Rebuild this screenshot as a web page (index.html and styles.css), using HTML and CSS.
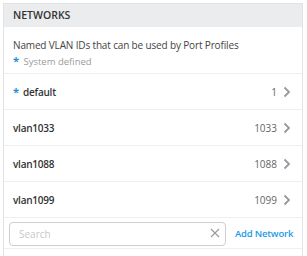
FILE: index.html
```html
<!DOCTYPE html>
<html lang="en">

<head>
    <meta charset="UTF-8">
    <title>Networks</title>
    <link rel="stylesheet" href="styles.css">
</head>

<body>
    <div class="panel">
        <div class="panel-header">NETWORKS</div>
        <div class="panel-intro">
            <p class="intro-text">Named VLAN IDs that can be used by Port Profiles</p>
            <p class="intro-note"><span class="star">*</span> System defined</p>
        </div>
        <ul class="net-list">
            <li class="net-row">
                <span class="net-name"><span class="star">*</span> default</span>
                <span class="net-id">1</span>
                <svg class="chevron" width="8" height="12" viewBox="0 0 8 12"><path d="M1.5 1.5 L6 6 L1.5 10.5" fill="none" stroke="#9a9a9a" stroke-width="1.8"/></svg>
            </li>
            <li class="net-row">
                <span class="net-name">vlan1033</span>
                <span class="net-id">1033</span>
                <svg class="chevron" width="8" height="12" viewBox="0 0 8 12"><path d="M1.5 1.5 L6 6 L1.5 10.5" fill="none" stroke="#9a9a9a" stroke-width="1.8"/></svg>
            </li>
            <li class="net-row">
                <span class="net-name">vlan1088</span>
                <span class="net-id">1088</span>
                <svg class="chevron" width="8" height="12" viewBox="0 0 8 12"><path d="M1.5 1.5 L6 6 L1.5 10.5" fill="none" stroke="#9a9a9a" stroke-width="1.8"/></svg>
            </li>
            <li class="net-row">
                <span class="net-name">vlan1099</span>
                <span class="net-id">1099</span>
                <svg class="chevron" width="8" height="12" viewBox="0 0 8 12"><path d="M1.5 1.5 L6 6 L1.5 10.5" fill="none" stroke="#9a9a9a" stroke-width="1.8"/></svg>
            </li>
        </ul>
        <div class="search-row">
            <div class="search-box">
                <input type="text" placeholder="Search">
                <svg class="clear" width="10" height="10" viewBox="0 0 10 10"><path d="M1 1 L9 9 M9 1 L1 9" stroke="#999" stroke-width="1.1"/></svg>
            </div>
            <a class="add-link" href="#">Add Network</a>
        </div>
    </div>
</body>

</html>
```

FILE: styles.css
```css
body {
    margin: 0;
    padding: 3px 4px 0 3px;
    background-color: #fff;
    font-family: 'Open Sans', sans-serif;
    color: #333;
}

.panel {
    border: 1px solid #e2e3e4;
    border-bottom: none;
    background-color: #fff;
    height: 260px;
}

.panel-header {
    background-color: #ebeced;
    height: 23px;
    line-height: 23px;
    padding-left: 9px;
    font-size: 10.5px;
    font-weight: 600;
    color: #333;
}

.panel-intro {
    padding: 10px 9px 0;
    height: 36px;
}

.intro-text {
    margin: 0;
    font-size: 10px;
    letter-spacing: -0.15px;
    line-height: 16px;
    color: #444;
}

.intro-note {
    margin: 0;
    font-size: 9.5px;
    line-height: 16px;
    color: #9b9b9b;
}

.star {
    color: #1e8fd6;
    font-weight: 700;
    font-size: 11px;
    margin-right: 2px;
}

.net-list {
    list-style: none;
    margin: 0;
    padding: 0;
}

.net-row {
    display: flex;
    align-items: center;
    height: 35px;
    padding: 0 11px 0 9px;
    border-top: 1px solid #efefef;
}

.net-name {
    flex: 1;
    font-size: 10px;
    font-weight: 600;
    letter-spacing: -0.25px;
    color: #333;
}

.net-id {
    font-size: 10px;
    color: #666;
    margin-right: 6px;
}

.search-row {
    display: flex;
    align-items: center;
    gap: 9px;
    padding: 3px 8px 3px 5px;
    border-top: 1px solid #efefef;
    border-bottom: 1px solid #efefef;
}

.search-box {
    position: relative;
    flex-shrink: 0;
    width: 217px;
    height: 24px;
}

.search-box input {
    box-sizing: border-box;
    width: 100%;
    height: 100%;
    border: 1px solid #cfcfcf;
    border-radius: 4px;
    padding: 0 22px 0 9px;
    font-family: 'Open Sans', sans-serif;
    font-size: 10px;
}

.search-box input::placeholder {
    color: #c8c8c8;
}

.clear {
    position: absolute;
    right: 6px;
    top: 7px;
}

.add-link {
    white-space: nowrap;
    font-size: 9.5px;
    font-weight: 600;
    letter-spacing: -0.2px;
    color: #1a9be4;
    text-decoration: none;
}
```
